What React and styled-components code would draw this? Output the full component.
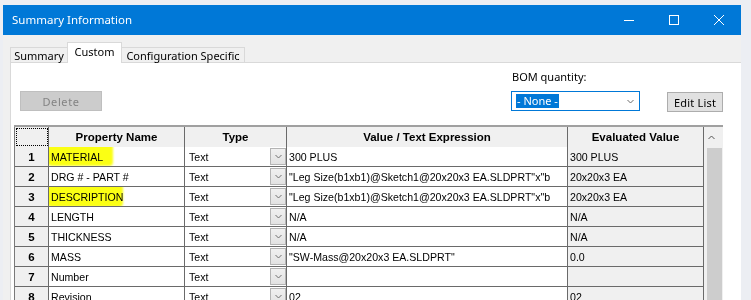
import React from 'react';
import styled, { createGlobalStyle } from 'styled-components';

const Global = createGlobalStyle`
  html, body { margin: 0; padding: 0; overflow: hidden; }
  body { background: #eceef3; width: 751px; height: 300px; }
`;

const Page = styled.div`
  box-sizing: border-box;
  height: 300px;
  padding: 5px 0 0 3px;
`;

const Window = styled.div`
  width: 738px;
  height: 295px;
  display: flex;
  flex-direction: column;
  font-family: "Noto Sans", "Open Sans", sans-serif;
`;

const TitleBar = styled.div`
  height: 30px;
  flex: none;
  background: #0078d7;
  display: flex;
  align-items: center;
  color: #fff;
`;

const Title = styled.div`
  flex: 1;
  padding-left: 9px;
  font-size: 11.5px;
  line-height: 30px;
  padding-bottom: 1px;
`;

const CaptionButton = styled.div`
  width: 45px;
  height: 30px;
  display: flex;
  align-items: center;
  justify-content: center;
`;

const Body = styled.div`
  flex: 1;
  display: flex;
  flex-direction: column;
  background: #f0f0f0;
`;

const TabStrip = styled.div`
  height: 27px;
  flex: none;
  display: flex;
  align-items: flex-end;
  padding-left: 7px;
`;

const Tab = styled.div`
  position: relative;
  z-index: ${p => (p.$active ? 2 : 1)};
  box-sizing: border-box;
  width: ${p => p.$w}px;
  height: ${p => (p.$active ? 21 : 15)}px;
  margin-right: -1px;
  margin-bottom: ${p => (p.$active ? -1 : 0)}px;
  border: 1px solid #d9d9d9;
  border-bottom: none;
  background: ${p => (p.$active ? '#ffffff' : '#f0f0f0')};
  display: flex;
  align-items: center;
  justify-content: center;
  font-size: 11px;
  color: #000;
  padding-bottom: ${p => (p.$active ? 4 : 0)}px;
`;

const Panel = styled.div`
  flex: 1;
  background: #fff;
  border-top: 1px solid #d9d9d9;
  border-left: 1px solid #d9d9d9;
  margin-left: 7px;
  padding: 6px 0 0 3px;
  display: flex;
  flex-direction: column;
  overflow: hidden;
`;

const Toolbar = styled.div`
  width: 709px;
  display: flex;
  justify-content: space-between;
  align-items: flex-end;
`;

const Button = styled.div`
  box-sizing: border-box;
  width: ${p => p.$w}px;
  height: 20px;
  margin-left: ${p => p.$ml || 0}px;
  margin-bottom: ${p => p.$mb || 0}px;
  display: flex;
  align-items: center;
  justify-content: center;
  font-size: 11px;
  letter-spacing: ${p => (p.$disabled ? 0.6 : 0.2)}px;
  background: ${p => (p.$disabled ? '#cccccc' : '#e1e1e1')};
  border: 1px solid ${p => (p.$disabled ? '#bfbfbf' : '#adadad')};
  color: ${p => (p.$disabled ? '#838383' : '#000')};
`;

const RightGroup = styled.div`
  display: flex;
  align-items: flex-end;
  gap: 27px;
`;

const Field = styled.div`
  display: flex;
  flex-direction: column;
  gap: 7px;
`;

const Label = styled.div`
  font-size: 11px;
  line-height: 15px;
  padding-left: 1px;
`;

const Combo = styled.div`
  box-sizing: border-box;
  width: 129px;
  height: 20px;
  border: 1px solid #0078d7;
  display: flex;
  align-items: center;
  justify-content: space-between;
  padding: 0 5px 0 4px;
`;

const Selected = styled.span`
  background: #0078d7;
  color: #fff;
  font-size: 11px;
  line-height: 14px;
  padding: 0 1px;
`;

const TableArea = styled.div`
  margin-top: 14px;
  width: 709px;
  display: flex;
  border-top: 2px solid #a0a0a0;
`;

const Grid = styled.div`
  display: grid;
  grid-template-columns: 34px 136px 102px 281px 136px;
  grid-auto-rows: 20px;
  border-left: 1px solid #7a7a7a;
  font-family: "Liberation Sans", Arial, sans-serif;
  color: #000;
`;

const Cell = styled.div`
  position: relative;
  box-sizing: border-box;
  height: ${p => (p.$head ? 21 : 20)}px;
  border-right: 1px solid #6a6a6a;
  border-bottom: 1px solid #6a6a6a;
  background: ${p => (p.$gray ? '#f0f0f0' : '#ffffff')};
  display: flex;
  align-items: center;
  justify-content: ${p => (p.$center ? 'center' : 'flex-start')};
  padding-left: ${p => (p.$center ? 0 : p.$pl || 2)}px;
  font-weight: ${p => (p.$bold ? 700 : 400)};
  font-size: ${p => (p.$bold ? 11.5 : 10.6)}px;
  white-space: nowrap;
  overflow: hidden;
`;

const Focus = styled.div`
  position: absolute;
  inset: 1px 0 1px 1px;
  border: 1px dotted #000;
`;

const Marker = styled.span`
  position: absolute;
  left: -3px;
  top: ${p => p.$top}px;
  width: ${p => p.$w}px;
  height: 22px;
  background: #fbff14;
  border-radius: 5px 3px 4px 6px;
  filter: blur(1.2px);
  mix-blend-mode: multiply;
  pointer-events: none;
`;

const CellText = styled.span`
  position: relative;
`;

const DropButton = styled.div`
  position: absolute;
  right: 0;
  top: 1px;
  width: 16px;
  height: 17px;
  box-sizing: border-box;
  border: 1px solid #b4b4b4;
  background: linear-gradient(#f0f0f0, #e2e2e2);
  display: flex;
  align-items: center;
  justify-content: center;
`;

const Scrollbar = styled.div`
  width: 19px;
  background: #f0f0f0;
  display: flex;
  flex-direction: column;
`;

const ScrollArrow = styled.div`
  height: 21px;
  display: flex;
  align-items: center;
  justify-content: center;
  padding-right: 5px;
`;

const Thumb = styled.div`
  flex: 1;
  margin-left: 3px;
  width: 15px;
  background: #cdcdcd;
`;

const Chevron = ({ color = '#606060', up = false, w = 7 }) => (
  <svg width={w} height="5" viewBox="0 0 7 5">
    <path
      d={up ? 'M0.5 4 L3.5 1 L6.5 4' : 'M0.5 1 L3.5 4 L6.5 1'}
      fill="none"
      stroke={color}
      strokeWidth="1"
    />
  </svg>
);

const rows = [
  ['1', 'MATERIAL', '300 PLUS', '300 PLUS', 67],
  ['2', 'DRG # - PART #', '"Leg Size(b1xb1)@Sketch1@20x20x3 EA.SLDPRT"x"b', '20x20x3 EA'],
  ['3', 'DESCRIPTION', '"Leg Size(b1xb1)@Sketch1@20x20x3 EA.SLDPRT"x"b', '20x20x3 EA', 77],
  ['4', 'LENGTH', 'N/A', 'N/A'],
  ['5', 'THICKNESS', 'N/A', 'N/A'],
  ['6', 'MASS', '"SW-Mass@20x20x3 EA.SLDPRT"', '0.0'],
  ['7', 'Number', '', ''],
  ['8', 'Revision', '02', '02'],
];

export default function App() {
  return (
    <Page>
      <Global />
      <Window>
        <TitleBar>
          <Title>Summary Information</Title>
          <CaptionButton>
            <svg width="10" height="10" viewBox="0 0 10 10">
              <path d="M0 5.5 H10" stroke="#fff" strokeWidth="1" />
            </svg>
          </CaptionButton>
          <CaptionButton>
            <svg width="10" height="10" viewBox="0 0 10 10">
              <rect x="0.5" y="0.5" width="9" height="9" fill="none" stroke="#fff" strokeWidth="1" />
            </svg>
          </CaptionButton>
          <CaptionButton>
            <svg width="10" height="10" viewBox="0 0 10 10">
              <path d="M0 0 L10 10 M10 0 L0 10" stroke="#fff" strokeWidth="1" />
            </svg>
          </CaptionButton>
        </TitleBar>
        <Body>
          <TabStrip>
            <Tab $w={58}>Summary</Tab>
            <Tab $w={55} $active>Custom</Tab>
            <Tab $w={124}>Configuration Specific</Tab>
          </TabStrip>
          <Panel>
            <Toolbar>
              <Button $w={82} $ml={6} $disabled>Delete</Button>
              <RightGroup>
                <Field>
                  <Label>BOM quantity:</Label>
                  <Combo>
                    <Selected>- None -</Selected>
                    <Chevron color="#6d6d6d" />
                  </Combo>
                </Field>
                <Button $w={56} $mb={-1}>Edit List</Button>
              </RightGroup>
            </Toolbar>
            <TableArea>
              <Grid>
                <Cell $head $gray $center><Focus /></Cell>
                <Cell $head $gray $center $bold>Property Name</Cell>
                <Cell $head $gray $center $bold>Type</Cell>
                <Cell $head $gray $center $bold>Value / Text Expression</Cell>
                <Cell $head $gray $center $bold>Evaluated Value</Cell>
                {rows.map(([n, name, value, evald, mark]) => (
                  <React.Fragment key={n}>
                    <Cell $gray $center $bold>{n}</Cell>
                    <Cell>
                      {mark && <Marker $w={mark} $top={n === '1' ? -3 : -2} />}
                      <CellText>{name}</CellText>
                    </Cell>
                    <Cell $pl={4}>
                      Text
                      <DropButton><Chevron color="#707070" /></DropButton>
                    </Cell>
                    <Cell>{value}</Cell>
                    <Cell $gray>{evald}</Cell>
                  </React.Fragment>
                ))}
              </Grid>
              <Scrollbar>
                <ScrollArrow><Chevron up color="#555" /></ScrollArrow>
                <Thumb />
              </Scrollbar>
            </TableArea>
          </Panel>
        </Body>
      </Window>
    </Page>
  );
}
